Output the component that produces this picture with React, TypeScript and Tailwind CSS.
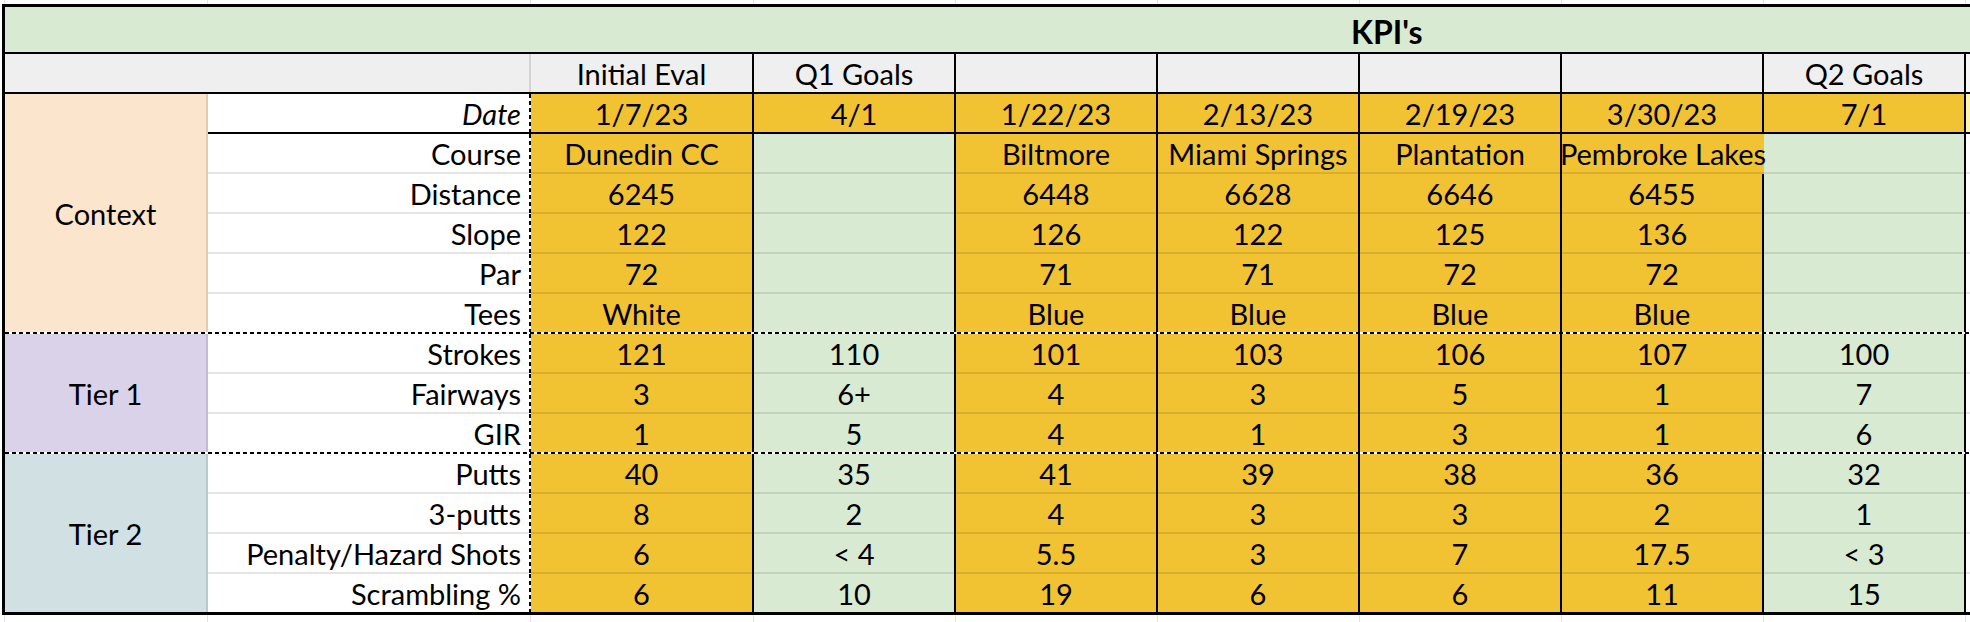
import React from 'react';

type Col = { head: string; wide?: boolean; goal?: boolean };

const columns: Col[] = [
  { head: 'Initial Eval', wide: true },
  { head: 'Q1 Goals', goal: true },
  { head: '' },
  { head: '' },
  { head: '' },
  { head: '' },
  { head: 'Q2 Goals', goal: true },
];

type RowData = { label: string; values: string[]; italic?: boolean };

const context: RowData[] = [
  { label: 'Course', values: ['Dunedin CC', '', 'Biltmore', 'Miami Springs', 'Plantation', 'Pembroke Lakes', ''] },
  { label: 'Distance', values: ['6245', '', '6448', '6628', '6646', '6455', ''] },
  { label: 'Slope', values: ['122', '', '126', '122', '125', '136', ''] },
  { label: 'Par', values: ['72', '', '71', '71', '72', '72', ''] },
  { label: 'Tees', values: ['White', '', 'Blue', 'Blue', 'Blue', 'Blue', ''] },
];

const tier1: RowData[] = [
  { label: 'Strokes', values: ['121', '110', '101', '103', '106', '107', '100'] },
  { label: 'Fairways', values: ['3', '6+', '4', '3', '5', '1', '7'] },
  { label: 'GIR', values: ['1', '5', '4', '1', '3', '1', '6'] },
];

const tier2: RowData[] = [
  { label: 'Putts', values: ['40', '35', '41', '39', '38', '36', '32'] },
  { label: '3-putts', values: ['8', '2', '4', '3', '3', '2', '1'] },
  { label: 'Penalty/Hazard Shots', values: ['6', '< 4', '5.5', '3', '7', '17.5', '< 3'] },
  { label: 'Scrambling %', values: ['6', '10', '19', '6', '6', '11', '15'] },
];

const dashedH =
  'h-[2px] [background-image:repeating-linear-gradient(90deg,#000_0px,#000_4px,transparent_4px,transparent_7px)]';
const dashedV =
  'w-[2px] shrink-0 self-stretch [background-image:repeating-linear-gradient(180deg,#000_0px,#000_4px,transparent_4px,transparent_7px)]';

function VLine() {
  return <div className="w-[2px] shrink-0 self-stretch bg-black" />;
}

function Row({ row, date, last }: { row: RowData; date?: boolean; last?: boolean }) {
  const grid = last ? '' : 'border-b-2 border-black/10';
  return (
    <div className={`flex ${last ? 'h-[38px]' : 'h-[40px]'}`}>
      <div className={`flex w-[321px] shrink-0 items-center justify-end bg-white pr-[8px] ${grid}`}>
        <span className={row.italic ? 'italic' : ''}>{row.label}</span>
      </div>
      <div className={dashedV} />
      {columns.map((c, i) => {
        const bg = c.goal && !date ? 'bg-[#d9ead3]' : 'bg-[#f1c232]';
        // long course name spills over the border on its right
        const spill = row.values[i] === 'Pembroke Lakes';
        const hideLine = row.values[i - 1] === 'Pembroke Lakes';
        return (
          <React.Fragment key={i}>
            {i > 0 && !hideLine && <VLine />}
            <div
              className={`flex shrink-0 items-center justify-center whitespace-nowrap ${bg} ${grid} ${
                c.wide ? 'w-[221px]' : spill ? 'w-[202px]' : 'w-[200px]'
              }`}
            >
              <span className={spill ? 'relative z-10' : ''}>{row.values[i]}</span>
            </div>
          </React.Fragment>
        );
      })}
      <VLine />
      <div className={`flex-1 ${date ? 'bg-[#fff5a8]' : 'bg-white'} ${grid}`} />
    </div>
  );
}

function Section({
  title,
  bg,
  rows,
  withDate,
}: {
  title: string;
  bg: string;
  rows: RowData[];
  withDate?: boolean;
}) {
  return (
    <div className="flex">
      <div className={`flex w-[203px] shrink-0 items-center justify-center border-r-2 border-black/10 ${bg}`}>
        {title}
      </div>
      <div className="flex flex-1 flex-col">
        {withDate && (
          <>
            <Row
              row={{ label: 'Date', italic: true, values: ['1/7/23', '4/1', '1/22/23', '2/13/23', '2/19/23', '3/30/23', '7/1'] }}
              date
              last
            />
            <div className="h-[2px] bg-black" />
          </>
        )}
        {rows.map((r, i) => (
          <Row key={r.label} row={r} last={i === rows.length - 1} />
        ))}
      </div>
    </div>
  );
}

function GridStrip({ h }: { h: string }) {
  const b = 'shrink-0 border-r border-[#e2e2e2]';
  return (
    <div className={`flex ${h}`}>
      <div className={`w-[5px] ${b}`} />
      <div className={`w-[203px] ${b}`} />
      <div className={`w-[323px] ${b}`} />
      <div className={`w-[223px] ${b}`} />
      <div className={`w-[202px] ${b}`} />
      <div className={`w-[202px] ${b}`} />
      <div className={`w-[202px] ${b}`} />
      <div className={`w-[202px] ${b}`} />
      <div className={`w-[202px] ${b}`} />
      <div className={`w-[202px] ${b}`} />
    </div>
  );
}

export default function App() {
  return (
    <div className="h-[622px] w-[1970px] overflow-hidden bg-white text-[29px] leading-none text-black [font-family:Lato,'Liberation_Sans',sans-serif]">
      <GridStrip h="h-[4px]" />
      <div className="ml-[2px] w-[2100px] border-b-[3px] border-l-[3px] border-t-[3px] border-black">
        <div className="flex h-[45px] items-center bg-[#d9ead3] pt-[4px]">
          <div className="w-[1346px] shrink-0" />
          <span className="text-[32px] font-bold">KPI's</span>
        </div>
        <div className="h-[2px] bg-black" />
        <div className="flex h-[38px]">
          <div className="w-[524px] shrink-0 bg-[#efefef]" />
          <div className="w-[2px] shrink-0 bg-[#d4d4d4]" />
          {columns.map((c, i) => (
            <React.Fragment key={i}>
              {i > 0 && <VLine />}
              <div
                className={`flex shrink-0 items-center justify-center bg-[#efefef] ${c.wide ? 'w-[221px]' : 'w-[200px]'}`}
              >
                {c.head}
              </div>
            </React.Fragment>
          ))}
          <VLine />
          <div className="flex-1 bg-[#f7f7f7]" />
        </div>
        <div className="h-[2px] bg-black" />
        <Section title="Context" bg="bg-[#fce5cd]" rows={context} withDate />
        <div className={dashedH} />
        <Section title="Tier 1" bg="bg-[#d9d2e9]" rows={tier1} />
        <div className={dashedH} />
        <Section title="Tier 2" bg="bg-[#d0e0e3]" rows={tier2} />
      </div>
      <GridStrip h="h-[8px]" />
    </div>
  );
}
